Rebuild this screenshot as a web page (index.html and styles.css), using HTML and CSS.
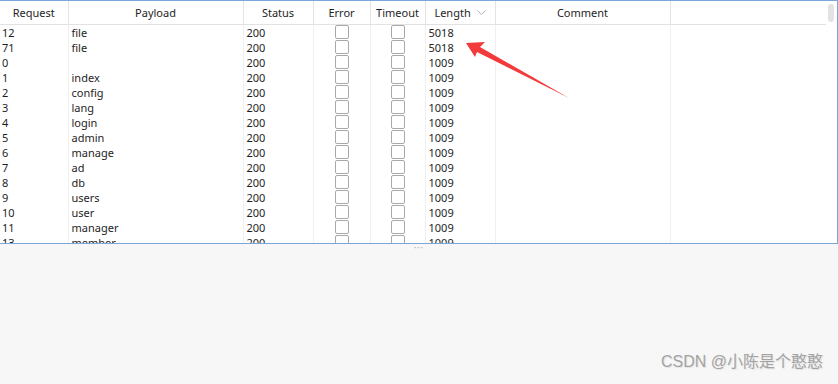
FILE: index.html
```html
<!DOCTYPE html>
<html lang="en">
<head>
    <meta charset="UTF-8">
    <title>Intruder results</title>
    <link rel="stylesheet" href="styles.css">
</head>
<body>
    <div class="results-pane">
        <table class="results">
            <colgroup>
                <col style="width: 68px">
                <col style="width: 175px">
                <col style="width: 70px">
                <col style="width: 57px">
                <col style="width: 55px">
                <col style="width: 70px">
                <col style="width: 175px">
                <col>
            </colgroup>
            <thead>
                <tr>
                    <th>Request</th>
                    <th>Payload</th>
                    <th>Status</th>
                    <th>Error</th>
                    <th>Timeout</th>
                    <th>Length <svg class="sort" width="9" height="6" viewBox="0 0 9 6"><path d="M0.5 0.5 L4.5 4.5 L8.5 0.5" fill="none" stroke="#b4b4b4" stroke-width="1"/></svg></th>
                    <th>Comment</th>
                    <th></th>
                </tr>
            </thead>
            <tbody>
                <tr><td>12</td><td>file</td><td>200</td><td class="chk"><span class="box"></span></td><td class="chk"><span class="box"></span></td><td>5018</td><td></td><td></td></tr>
                <tr><td>71</td><td>file</td><td>200</td><td class="chk"><span class="box"></span></td><td class="chk"><span class="box"></span></td><td>5018</td><td></td><td></td></tr>
                <tr><td>0</td><td></td><td>200</td><td class="chk"><span class="box"></span></td><td class="chk"><span class="box"></span></td><td>1009</td><td></td><td></td></tr>
                <tr><td>1</td><td>index</td><td>200</td><td class="chk"><span class="box"></span></td><td class="chk"><span class="box"></span></td><td>1009</td><td></td><td></td></tr>
                <tr><td>2</td><td>config</td><td>200</td><td class="chk"><span class="box"></span></td><td class="chk"><span class="box"></span></td><td>1009</td><td></td><td></td></tr>
                <tr><td>3</td><td>lang</td><td>200</td><td class="chk"><span class="box"></span></td><td class="chk"><span class="box"></span></td><td>1009</td><td></td><td></td></tr>
                <tr><td>4</td><td>login</td><td>200</td><td class="chk"><span class="box"></span></td><td class="chk"><span class="box"></span></td><td>1009</td><td></td><td></td></tr>
                <tr><td>5</td><td>admin</td><td>200</td><td class="chk"><span class="box"></span></td><td class="chk"><span class="box"></span></td><td>1009</td><td></td><td></td></tr>
                <tr><td>6</td><td>manage</td><td>200</td><td class="chk"><span class="box"></span></td><td class="chk"><span class="box"></span></td><td>1009</td><td></td><td></td></tr>
                <tr><td>7</td><td>ad</td><td>200</td><td class="chk"><span class="box"></span></td><td class="chk"><span class="box"></span></td><td>1009</td><td></td><td></td></tr>
                <tr><td>8</td><td>db</td><td>200</td><td class="chk"><span class="box"></span></td><td class="chk"><span class="box"></span></td><td>1009</td><td></td><td></td></tr>
                <tr><td>9</td><td>users</td><td>200</td><td class="chk"><span class="box"></span></td><td class="chk"><span class="box"></span></td><td>1009</td><td></td><td></td></tr>
                <tr><td>10</td><td>user</td><td>200</td><td class="chk"><span class="box"></span></td><td class="chk"><span class="box"></span></td><td>1009</td><td></td><td></td></tr>
                <tr><td>11</td><td>manager</td><td>200</td><td class="chk"><span class="box"></span></td><td class="chk"><span class="box"></span></td><td>1009</td><td></td><td></td></tr>
                <tr><td>13</td><td>member</td><td>200</td><td class="chk"><span class="box"></span></td><td class="chk"><span class="box"></span></td><td>1009</td><td></td><td></td></tr>
            </tbody>
        </table>
        <div class="scroll-thumb"></div>
    </div>

    <div class="splitter">&bull;&bull;&bull;</div>

    <div class="lower-pane">
        <span class="watermark">CSDN @小陈是个憨憨</span>
    </div>

    <!-- annotation arrow drawn over the screenshot -->
    <svg class="arrow" width="838" height="384" viewBox="0 0 838 384">
        <polygon points="466,43 485,42 480,47 569,98 477,52 475,57" fill="#f23a3a"/>
    </svg>
</body>
</html>
```

FILE: styles.css
```css
* {
    margin: 0;
    padding: 0;
    box-sizing: border-box;
}

body {
    font-family: "Noto Sans", "Open Sans", sans-serif;
    font-size: 11px;
    color: #1e1e1e;
    background: #f7f7f7;
    width: 838px;
    height: 384px;
    overflow: hidden;
    position: relative;
}

.results-pane {
    position: relative;
    height: 244px;
    background: #fff;
    border: 1px solid #7aa6d8;
    border-left: none;
    overflow: hidden;
}

.results {
    width: 826px;
    border-collapse: collapse;
    table-layout: fixed;
}

.results th {
    height: 23px;
    font-weight: normal;
    text-align: center;
    border-right: 1px solid #e4e4e4;
    border-bottom: 1px solid #e2e2e2;
    white-space: nowrap;
}

.results th:last-child,
.results td:last-child {
    border-right: none;
}

.sort {
    margin-left: 3px;
    vertical-align: 1px;
}

.results td {
    height: 15px;
    line-height: 15px;
    padding: 0 3px;
    border-right: 1px solid #f0f0f0;
    white-space: nowrap;
    overflow: hidden;
}

.results td:first-child {
    padding-left: 2px;
}

.results td.chk {
    text-align: center;
    padding: 0;
}

.box {
    display: inline-block;
    width: 14px;
    height: 14px;
    border: 1px solid #a9a9a9;
    border-radius: 2px;
    vertical-align: top;
    background: #fff;
}

.scroll-thumb {
    position: absolute;
    top: 3px;
    right: 3px;
    width: 6px;
    height: 18px;
    border-radius: 3px;
    background: #e3e3e3;
}

.splitter {
    height: 7px;
    line-height: 8px;
    text-align: center;
    font-size: 6px;
    letter-spacing: 1px;
    color: #b8b8b8;
}

.lower-pane {
    height: 133px;
    display: flex;
    justify-content: flex-end;
    align-items: flex-end;
    padding: 0 15px 12px 0;
}

.watermark {
    font-family: "Liberation Sans", "Noto Sans CJK SC", sans-serif;
    font-size: 16px;
    color: #a4a4a4;
    text-shadow: 1px 1px 1px #e0e0e0;
}

.arrow {
    position: absolute;
    top: 0;
    left: 0;
    pointer-events: none;
}
```
